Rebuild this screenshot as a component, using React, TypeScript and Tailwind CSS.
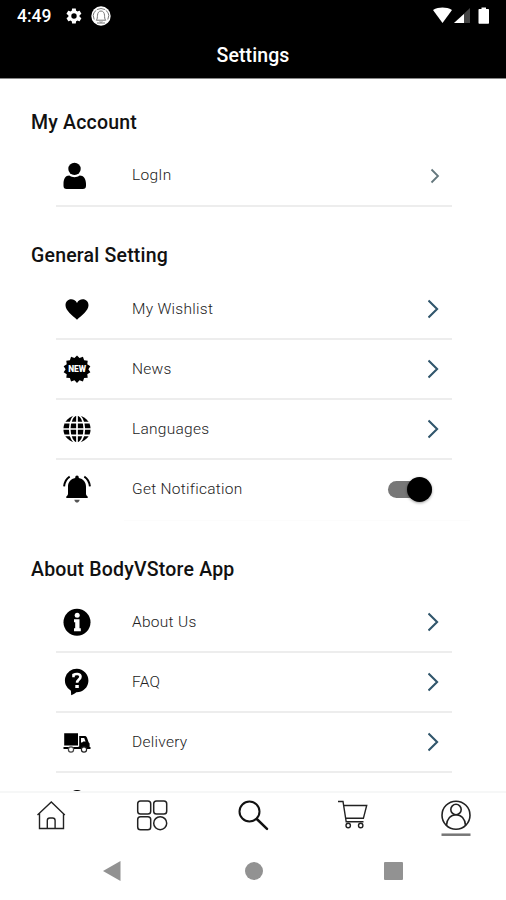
import type { ReactNode } from "react";

function RowIcon({ children }: { children: ReactNode }) {
  return (
    <svg className="h-7 w-7 shrink-0" viewBox="0 0 28 28" fill="black">
      {children}
    </svg>
  );
}

const burst = Array.from({ length: 28 }, (_, i) => {
  const r = i % 2 === 0 ? 13.7 : 11.4;
  const a = (i * Math.PI) / 14;
  return `${(14 + r * Math.sin(a)).toFixed(2)},${(14.2 - r * Math.cos(a)).toFixed(2)}`;
}).join(" ");

const icons = {
  user: (
    <RowIcon>
      <circle cx="11.5" cy="6.9" r="6.2" />
      <path d="M6.3 13.5c3 2.200 7.400 2.200 10.400 0 3.900 0 6.300 3.500 6.300 8.200v2.100c0 2.100-1.100 3.200-3.200 3.200H3.600C1.500 27 .5 25.900.5 23.800v-2.100c0-4.700 2-8.200 5.800-8.200z" />
    </RowIcon>
  ),
  heart: (
    <RowIcon>
      <path d="M14 24.800C9.500 20.500 2.500 15.800 2.500 10.300c0-3.600 2.500-6 5.700-6 2.500 0 4.600 1.300 5.800 3.600 1.200-2.300 3.300-3.600 5.800-3.600 3.200 0 5.700 2.400 5.700 6 0 5.500-7 10.200-11.500 14.500z" />
    </RowIcon>
  ),
  news: (
    <RowIcon>
      <polygon points={burst} />
      <text x="14.200" y="17.300" textAnchor="middle" fill="white" fontSize="8.300" fontWeight="900" fontFamily="Roboto, sans-serif" textLength="18" lengthAdjust="spacingAndGlyphs">
        NEW
      </text>
    </RowIcon>
  ),
  globe: (
    <RowIcon>
      <circle cx="14" cy="14" r="13.600" />
      <g fill="none" stroke="white" strokeWidth="1.700">
        <path d="M14 0v28M0 14h28M1.500 7.700h25M1.500 20.300h25" />
        <ellipse cx="14" cy="14" rx="7.300" ry="14" />
      </g>
    </RowIcon>
  ),
  bell: (
    <RowIcon>
      <path d="M12.200 3V2.400a1.800 1.800 0 0 1 3.600 0V3c4.500.8 7.200 4.200 7.200 8.700v7.100c0 1.200.7 2 1.700 2.800v1.500H3.300v-1.500c1-.8 1.700-1.600 1.700-2.800v-7.100C5 7.200 7.700 3.800 12.200 3z" />
      <path d="M11.300 24.800h5.400c-.5 1.900-1.400 2.800-2.700 2.800s-2.200-.9-2.700-2.800z" fill="#555" />
      <path d="M6.700 1.600C3.700 3.500 1.600 6.900 1.100 11.300M21.300 1.600c3 1.900 5.100 5.300 5.600 9.700" fill="none" stroke="black" strokeWidth="2" />
    </RowIcon>
  ),
  info: (
    <RowIcon>
      <circle cx="14" cy="14.200" r="13.500" />
      <path d="M11 11.300h5.500v9h1.300v2.900H11v-2.900h1.200v-6.100H11z" fill="white" />
      <circle cx="14.200" cy="7.300" r="2.500" fill="white" />
    </RowIcon>
  ),
  faq: (
    <RowIcon>
      <path d="M14 .8a11.700 11.700 0 1 1-.7 23.500c-1 .9-2.700 2.200-5.100 2.900l-.3-4.500A11.700 11.700 0 0 1 14 .8z" />
      <path d="M10.500 9.200V6.800c2-1.200 7-1.500 7 1.900 0 2.800-3.400 2.900-3.400 6" fill="none" stroke="white" strokeWidth="2.600" />
      <path d="M12.300 17h3.500v3h-3.500z" fill="white" />
    </RowIcon>
  ),
  truck: (
    <RowIcon>
      <path d="M1.200 5.200h13.800v12.300H1.200zM.5 19h16v2H.5z" />
      <path d="M16.200 8h5.300c1.300 0 2 .5 2.500 1.700l1.600 4.600 1 1.200V19h.9v2H15.500v-2.500h.7z" />
      <path d="M18 10h3.200l1.400 3.500h-2.300l-1.200 1H18z" fill="white" />
      <circle cx="8" cy="21.500" r="2.600" fill="white" stroke="#444" strokeWidth="1.200" />
      <circle cx="21" cy="21.500" r="2.600" fill="white" stroke="#222" strokeWidth="1.200" />
    </RowIcon>
  ),
  next: (
    <RowIcon>
      <circle cx="14" cy="10" r="8" />
    </RowIcon>
  ),
};

function Chevron({ small = false }: { small?: boolean }) {
  return small ? (
    <svg className="mr-2.5 h-5 w-3" viewBox="0 0 12 20" fill="none" stroke="#64777d" strokeWidth="1.800">
      <path d="M1.500 3.500l6.500 6.500-6.500 6.500" />
    </svg>
  ) : (
    <svg className="mr-3 h-5 w-3" viewBox="0 0 12 20" fill="none" stroke="#31566c" strokeWidth="2.100">
      <path d="M.5 1.500l8.600 8.500-8.600 8.500" />
    </svg>
  );
}

function Toggle() {
  return (
    <div className="mr-5 flex h-[17px] w-11 items-center justify-end rounded-full bg-[#777]">
      <div className="h-[25px] w-[25px] shrink-0 rounded-full bg-black shadow-[0_1px_3px_rgba(0,0,0,0.4)]" />
    </div>
  );
}

function Row({ icon, label, end, last }: { icon: ReactNode; label: string; end?: ReactNode; last?: boolean }) {
  return (
    <div className={`ml-14 mr-[54px] flex h-[60.200px] items-center border-b-2 pl-[7px] ${last ? "border-transparent" : "border-[#ededed]"}`}>
      {icon}
      <span className="ml-[41px] flex-1 pt-px text-[15.500px] font-light tracking-[0.280px] text-[#222]">{label}</span>
      {end ?? <Chevron />}
    </div>
  );
}

function Heading({ children }: { children: ReactNode }) {
  return <h2 className="pl-[31px] text-[19.500px] leading-6 font-medium tracking-[0.200px] text-[#111]">{children}</h2>;
}

export default function App() {
  return (
    <div className="flex h-[900px] w-[506px] flex-col overflow-hidden bg-white font-[Roboto,sans-serif]">
      <header className="h-[79px] shrink-0 border-b border-[#888] bg-black text-white">
        <div className="flex h-8 items-center pr-4 pl-[17px]">
          <span className="w-[48px] text-[17.500px] leading-8 font-medium">4:49</span>
          <svg className="h-[18px] w-[18px]" viewBox="0 0 24 24" fill="white">
            <path fillRule="evenodd" d="M19.400 13a7.500 7.500 0 0 0 0-2l2.200-1.600c.2-.2.300-.5.100-.7l-2-3.500c-.1-.2-.4-.3-.7-.2l-2.500 1a7 7 0 0 0-1.700-1l-.4-2.600c0-.3-.2-.4-.5-.4h-4c-.3 0-.5.100-.5.400L9 5a7 7 0 0 0-1.700 1l-2.500-1c-.2-.1-.5 0-.7.200l-2 3.500c-.1.200-.1.500.1.700L4.500 11a7.500 7.500 0 0 0 0 2l-2.200 1.600c-.2.200-.3.500-.1.700l2 3.500c.1.200.4.300.7.200l2.500-1A7 7 0 0 0 9 19l.4 2.600c0 .3.200.4.500.4h4c.300 0 .5-.1.500-.4l.4-2.600a7 7 0 0 0 1.700-1l2.500 1c.200.100.5 0 .7-.2l2-3.500c.1-.2.100-.5-.1-.7zM12 15.600a3.600 3.600 0 1 1 0-7.200 3.600 3.600 0 0 1 0 7.200z" />
          </svg>
          <svg className="ml-2 h-5 w-5" viewBox="0 0 20 20">
            <circle cx="10" cy="10" r="9.700" fill="white" />
            <path d="M5.200 14.200c1.300-1 1.100-3 1.300-5C6.700 6.800 7.800 5 10 5s3.300 1.800 3.500 4.200c.2 2 0 4 1.300 5zM8.800 15.500c.6 1 1.800 1 2.400 0M5.300 4.300L3 6.500l-.8 3 1 4M14.700 4.300L17 6.500l.8 3-1 4M6 3.500l4-1 4 1M6 17h8" fill="none" stroke="#777" strokeWidth="1" />
          </svg>
          <div className="flex-1" />
          <svg className="h-[18px] w-[58px]" viewBox="0 0 58 18">
            <path d="M1 3C7-.2 14 -.2 20 3L10.500 16z" fill="white" />
            <path d="M38 1v15H22z" fill="#444" />
            <path d="M32 7v9h-10z" fill="white" />
            <path d="M47.200 2h2.300V.5h4.500V2h2.300q.7 0 .7.700v13.300q0 .7-.7.700h-9.100q-.7 0-.7-.7V2.700q0-.7.700-.7z" fill="white" />
          </svg>
        </div>
        <h1 className="h-[46px] text-center text-[19.500px] leading-[48px] font-medium tracking-[0.100px]">Settings</h1>
      </header>

      <main className="h-[712px] shrink-0 overflow-hidden">
        <section className="pt-8">
          <Heading>My Account</Heading>
          <div className="pt-[11.500px]">
            <Row icon={icons.user} label="LogIn" end={<Chevron small />} />
          </div>
        </section>
        <section className="pt-[37.300px]">
          <Heading>General Setting</Heading>
          <div className="pt-[11.700px]">
            <Row icon={icons.heart} label="My Wishlist" />
            <Row icon={icons.news} label="News" />
            <Row icon={icons.globe} label="Languages" />
            <Row icon={icons.bell} label="Get Notification" end={<Toggle />} last />
          </div>
          <div className="mr-9 ml-[124px] h-px bg-[#fcfcfc]" />
        </section>
        <section className="pt-[36.300px]">
          <Heading>About BodyVStore App</Heading>
          <div className="pt-[11px]">
            <Row icon={icons.info} label="About Us" />
            <Row icon={icons.faq} label="FAQ" />
            <Row icon={icons.truck} label="Delivery" />
            <Row icon={icons.next} label="" />
          </div>
        </section>
      </main>

      <nav className="grid h-[52px] shrink-0 grid-cols-5 justify-items-center border-t-2 border-[#f6f7f7] pt-[7px]">
        <svg className="h-8 w-8" viewBox="0 0 32 32" fill="none" stroke="#222" strokeWidth="1.400">
          <path d="M2.500 15L16.300 2l13.500 13M4.500 13.500v15h24V13.500" />
          <path d="M12.300 28.500v-8q0-2.500 2.500-2.500h2.800q2.500 0 2.500 2.500v8" />
        </svg>
        <svg className="h-8 w-8" viewBox="0 0 32 32" fill="none" stroke="#222" strokeWidth="1.500">
          <rect x="1.700" y="1" width="13" height="13" rx="2.800" />
          <rect x="17.700" y="1" width="13" height="13" rx="2.800" />
          <rect x="1.700" y="16.700" width="13" height="13" rx="2.800" />
          <circle cx="24.200" cy="23.200" r="6.500" />
        </svg>
        <svg className="h-8 w-8" viewBox="0 0 32 32" fill="none" stroke="#111" strokeWidth="2">
          <circle cx="12.500" cy="11.500" r="10" />
          <path d="M19.800 19l10.200 9.800" strokeWidth="2.500" strokeLinecap="round" />
        </svg>
        <svg className="h-8 w-8" viewBox="0 0 32 32" fill="none" stroke="#222" strokeWidth="1.400">
          <path d="M-.5 1.500h5.500l3.200 20.300h17.300M6 5.500h22.700l-3.300 12.800H8" />
          <circle cx="10.200" cy="25.500" r="2.200" />
          <circle cx="22.700" cy="25.500" r="2.200" />
        </svg>
        <svg className="h-9 w-8" viewBox="0 0 32 36" fill="none" stroke="#222" strokeWidth="1.600">
          <circle cx="17" cy="15.200" r="14" />
          <circle cx="17" cy="9.500" r="5.200" />
          <path d="M7.500 25.200c.5-6.300 4.200-10.500 9.500-10.500s9 4.200 9.500 10.500" />
          <path d="M2.500 34.700h29" stroke="#777" strokeWidth="2.500" />
        </svg>
      </nav>

      <footer className="flex h-[57px] items-start pt-[18px] pl-[103px]">
        <svg className="h-5 w-[18px]" viewBox="0 0 18 20" fill="#929292">
          <path d="M17.500 0v20L0 10z" />
        </svg>
        <div className="mt-[0.500px] ml-[123.500px] h-[18px] w-[18px] rounded-full bg-[#929292]" />
        <div className="mt-[0.500px] ml-[121.500px] h-[18px] w-[19px] rounded-[1px] bg-[#929292]" />
      </footer>
    </div>
  );
}
